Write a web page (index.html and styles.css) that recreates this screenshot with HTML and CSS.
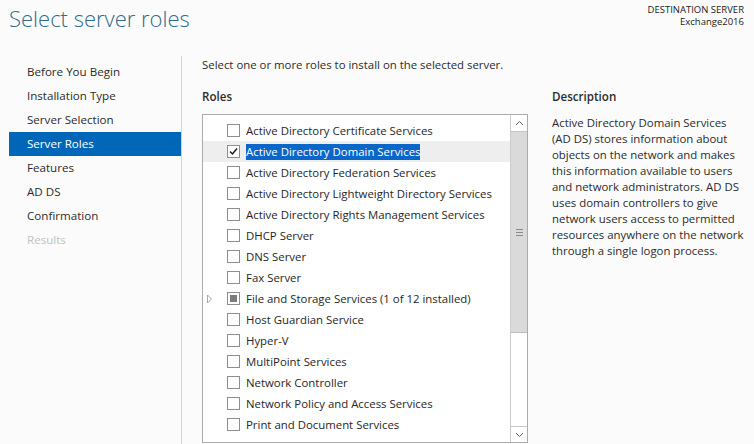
FILE: index.html
```html
<!DOCTYPE html>
<html lang="en">
<head>
<meta charset="utf-8">
<title>Select server roles</title>
<link rel="stylesheet" href="styles.css">
</head>
<body>
<div class="page">
  <header class="top">
    <h1 class="title">Select server roles</h1>
    <div class="dest">
      <div>DESTINATION SERVER</div>
      <div>Exchange2016</div>
    </div>
  </header>
  <div class="main">
    <nav class="nav">
      <div class="nav-item">Before You Begin</div>
      <div class="nav-item">Installation Type</div>
      <div class="nav-item">Server Selection</div>
      <div class="nav-item active">Server Roles</div>
      <div class="nav-item">Features</div>
      <div class="nav-item">AD DS</div>
      <div class="nav-item">Confirmation</div>
      <div class="nav-item disabled">Results</div>
    </nav>
    <section class="content">
      <p class="intro">Select one or more roles to install on the selected server.</p>
      <div class="cols">
        <div class="roles">
          <h2 class="heading">Roles</h2>
          <div class="listbox">
            <ul class="items">
              <li class="row"><span class="exp"></span><span class="cb"></span><span class="label">Active Directory Certificate Services</span></li>
              <li class="row hover"><span class="exp"></span><span class="cb"><svg width="11" height="11" viewBox="0 0 11 11"><path d="M2 5.5 L4.5 8 L9 2.5" fill="none" stroke="#1a1a1a" stroke-width="1.5"/></svg></span><span class="label sel">Active Directory Domain Services</span></li>
              <li class="row"><span class="exp"></span><span class="cb"></span><span class="label">Active Directory Federation Services</span></li>
              <li class="row"><span class="exp"></span><span class="cb"></span><span class="label">Active Directory Lightweight Directory Services</span></li>
              <li class="row"><span class="exp"></span><span class="cb"></span><span class="label">Active Directory Rights Management Services</span></li>
              <li class="row"><span class="exp"></span><span class="cb"></span><span class="label">DHCP Server</span></li>
              <li class="row"><span class="exp"></span><span class="cb"></span><span class="label">DNS Server</span></li>
              <li class="row"><span class="exp"></span><span class="cb"></span><span class="label">Fax Server</span></li>
              <li class="row"><span class="exp"><svg width="7" height="10" viewBox="0 0 7 10"><path d="M1.5 1 L5.5 5 L1.5 9 Z" fill="none" stroke="#a8a8a8" stroke-width="1"/></svg></span><span class="cb partial"><span class="dot"></span></span><span class="label">File and Storage Services (1 of 12 installed)</span></li>
              <li class="row"><span class="exp"></span><span class="cb"></span><span class="label">Host Guardian Service</span></li>
              <li class="row"><span class="exp"></span><span class="cb"></span><span class="label">Hyper-V</span></li>
              <li class="row"><span class="exp"></span><span class="cb"></span><span class="label">MultiPoint Services</span></li>
              <li class="row"><span class="exp"></span><span class="cb"></span><span class="label">Network Controller</span></li>
              <li class="row"><span class="exp"></span><span class="cb"></span><span class="label">Network Policy and Access Services</span></li>
              <li class="row"><span class="exp"></span><span class="cb"></span><span class="label">Print and Document Services</span></li>
            </ul>
            <div class="scrollbar">
              <div class="sb-btn up"><svg width="9" height="6" viewBox="0 0 9 6"><path d="M1 5 L4.5 1.5 L8 5" fill="none" stroke="#606060" stroke-width="1"/></svg></div>
              <div class="thumb"><span class="grip"></span><span class="grip"></span><span class="grip"></span></div>
              <div class="track"></div>
              <div class="sb-btn down"><svg width="9" height="6" viewBox="0 0 9 6"><path d="M1 1 L4.5 4.5 L8 1" fill="none" stroke="#606060" stroke-width="1"/></svg></div>
            </div>
          </div>
        </div>
        <div class="desc">
          <h2 class="heading">Description</h2>
          <p class="desc-text">Active Directory Domain Services (AD DS) stores information about objects on the network and makes this information available to users and network administrators. AD DS uses domain controllers to give network users access to permitted resources anywhere on the network through a single logon process.</p>
        </div>
      </div>
    </section>
  </div>
</div>
</body>
</html>
```

FILE: styles.css
```css
* { box-sizing: border-box; }

html, body {
  margin: 0;
  padding: 0;
  background: #fbfbfb;
}

body {
  font-family: "Open Sans", "Noto Sans", "Liberation Sans", sans-serif;
  font-size: 11.4px;
  color: #2b2b2b;
  width: 754px;
  height: 444px;
  overflow: hidden;
}

.page {
  display: flex;
  flex-direction: column;
  height: 444px;
}

.top {
  height: 56px;
  display: flex;
  justify-content: space-between;
  align-items: flex-start;
}

.title {
  margin: 0;
  padding: 3px 0 0 9px;
  font-size: 22px;
  font-weight: 300;
  line-height: 30px;
  color: #2f6a8d;
}

.dest {
  padding: 4px 10px 0 0;
  text-align: right;
  font-size: 9.5px;
  line-height: 12px;
  color: #222;
}

.main {
  flex: 1;
  display: flex;
  min-height: 0;
}

.nav {
  width: 182px;
  padding: 4px 0 0 9px;
  border-right: 1px solid #d2d2d2;
  font-size: 11.6px;
}

.nav-item {
  height: 24px;
  line-height: 24px;
  padding-left: 18px;
  color: #2b2b2b;
}

.nav-item.active {
  background: #0067b8;
  color: #fff;
}

.nav-item.disabled {
  color: #c2c2c2;
}

.content {
  flex: 1;
  padding: 1px 0 0 20px;
}

.intro {
  margin: 0;
  line-height: 16px;
}

.cols {
  display: flex;
  gap: 24px;
  margin-top: 16px;
}

.heading {
  margin: 0;
  font-size: 11.6px;
  font-weight: 600;
  line-height: 16px;
  color: #2b2b2b;
}

.roles {
  width: 326px;
}

.listbox {
  margin-top: 9px;
  height: 329px;
  border: 1px solid #ababab;
  background: #fff;
  display: flex;
}

.items {
  list-style: none;
  margin: 0;
  padding: 5px 0 0 0;
  width: 307px;
}

.row {
  height: 21px;
  display: flex;
  align-items: center;
  line-height: 16px;
  white-space: nowrap;
}

.row.hover {
  background: #eeeeee;
}

.exp {
  width: 24px;
  height: 21px;
  display: flex;
  align-items: center;
  padding-left: 3px;
}

.cb {
  width: 13px;
  height: 13px;
  border: 1px solid #8e8e8e;
  background: #fff;
  display: flex;
  align-items: center;
  justify-content: center;
  margin-right: 6px;
  flex: none;
}

.cb.partial .dot {
  width: 7px;
  height: 7px;
  background: #7b7b7b;
}

.label {
  color: #262626;
}

.label.sel {
  background: #0a66c8;
  color: #fff;
}

.scrollbar {
  width: 17px;
  border-left: 1px solid #cbcbcb;
  display: flex;
  flex-direction: column;
}

.sb-btn {
  height: 17px;
  display: flex;
  align-items: center;
  justify-content: center;
  background: #fff;
  flex: none;
}

.sb-btn.up {
  border-bottom: 1px solid #c4c4c4;
}

.sb-btn.down {
  height: 16px;
  border-top: 1px solid #c4c4c4;
}

.thumb {
  height: 201px;
  background: #dadada;
  border-bottom: 1px solid #bdbdbd;
  display: flex;
  flex-direction: column;
  align-items: center;
  justify-content: center;
  gap: 2px;
  flex: none;
}

.grip {
  width: 7px;
  height: 1px;
  background: #8a8a8a;
}

.track {
  flex: 1;
  background: #fff;
}

.desc {
  width: 193px;
}

.desc-text {
  margin: 10px 0 0 0;
  line-height: 16px;
  color: #2b2b2b;
}
```
